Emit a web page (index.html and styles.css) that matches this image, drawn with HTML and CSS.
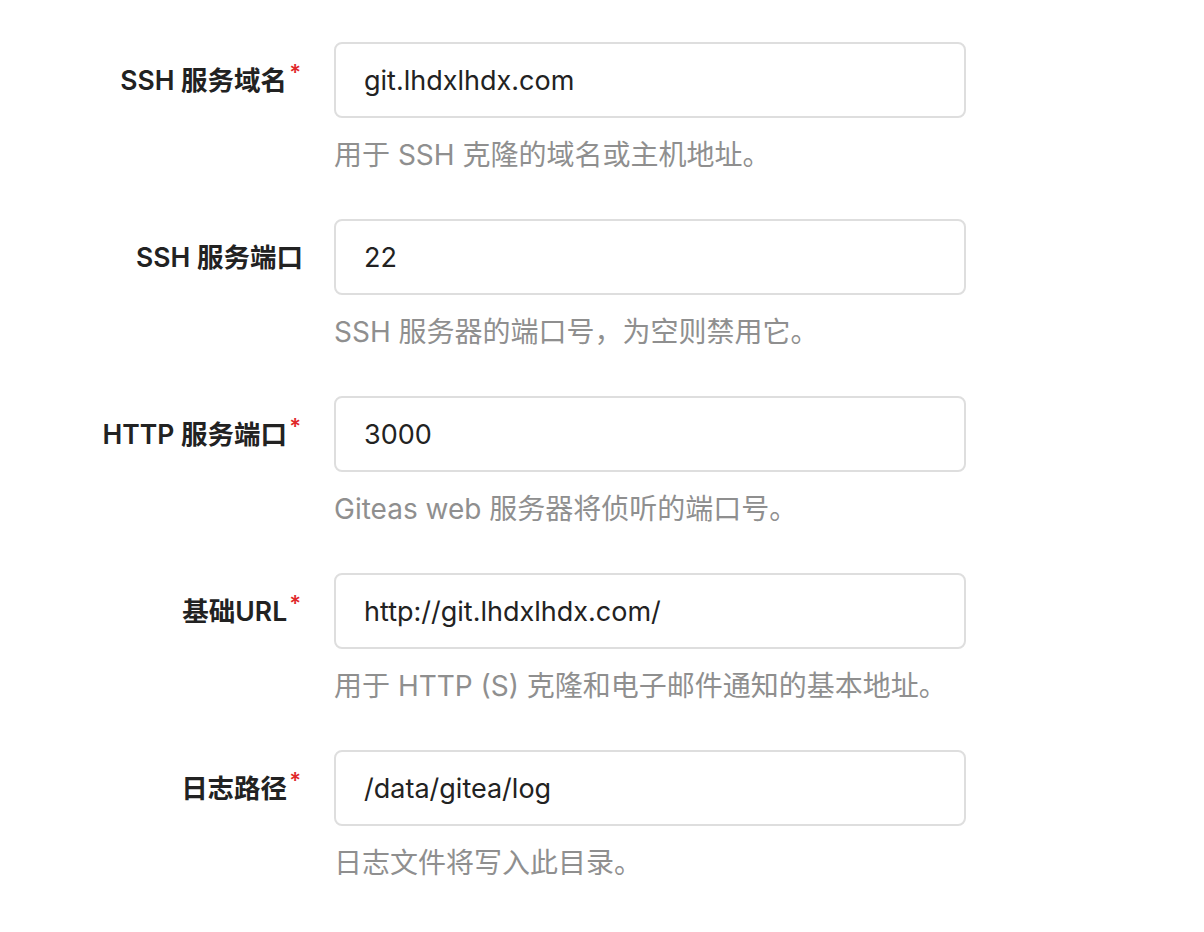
FILE: index.html
```html
<!DOCTYPE html>
<html lang="zh-CN">
<head>
  <meta charset="UTF-8" />
  <meta name="viewport" content="width=device-width, initial-scale=1.0" />
  <title>初始配置</title>
  <link rel="stylesheet" href="styles.css">
</head>
<body>

  <form class="install-form">
    <div class="field required">
      <label for="sshDomain">SSH 服务域名</label>
      <div class="control">
        <input id="sshDomain" type="text" value="git.lhdxlhdx.com" />
        <span class="help">用于 SSH 克隆的域名或主机地址。</span>
      </div>
    </div>

    <div class="field">
      <label for="sshPort">SSH 服务端口</label>
      <div class="control">
        <input id="sshPort" type="text" value="22" />
        <span class="help">SSH 服务器的端口号，为空则禁用它。</span>
      </div>
    </div>

    <div class="field required">
      <label for="httpPort">HTTP 服务端口</label>
      <div class="control">
        <input id="httpPort" type="text" value="3000" />
        <span class="help">Giteas web 服务器将侦听的端口号。</span>
      </div>
    </div>

    <div class="field required">
      <label for="appUrl">基础URL</label>
      <div class="control">
        <input id="appUrl" type="text" value="http://git.lhdxlhdx.com/" />
        <span class="help">用于 HTTP (S) 克隆和电子邮件通知的基本地址。</span>
      </div>
    </div>

    <div class="field required">
      <label for="logPath">日志路径</label>
      <div class="control">
        <input id="logPath" type="text" value="/data/gitea/log" />
        <span class="help">日志文件将写入此目录。</span>
      </div>
    </div>
  </form>

</body>
</html>
```

FILE: styles.css
```css
*, *::before, *::after {
  box-sizing: border-box;
}

:root {
  --color-bg: #ffffff;
  --color-text: #222222;
  --color-help: #8f8f8f;
  --color-border: #dedede;
  --color-required: #e0282a;
  --font-main: 'Inter', 'Noto Sans CJK SC', sans-serif;
}

html, body {
  margin: 0;
  padding: 0;
  font-family: var(--font-main);
  color: var(--color-text);
  background-color: var(--color-bg);
}

.install-form {
  padding-top: 42px;
}

.field {
  display: grid;
  grid-template-columns: 303px 632px;
  column-gap: 31px;
  margin-bottom: 46px;
}

.field label {
  height: 76px;
  padding-bottom: 3px;
  display: flex;
  align-items: center;
  justify-content: flex-end;
  font-size: 26.5px;
  font-weight: 600;
  color: var(--color-text);
}

.field.required label::after {
  content: '*';
  color: var(--color-required);
  font-size: 22px;
  margin-left: 2px;
  margin-right: 2px;
  align-self: flex-start;
  margin-top: 17px;
}

.control {
  display: flex;
  flex-direction: column;
}

.control input {
  height: 76px;
  width: 100%;
  padding: 0 28px;
  font-family: var(--font-main);
  font-size: 27px;
  color: var(--color-text);
  border: 2px solid var(--color-border);
  border-radius: 8px;
  outline: none;
  background: #fff;
}

.help {
  margin-top: 19px;
  font-size: 28px;
  line-height: 36px;
  color: var(--color-help);
}
```
